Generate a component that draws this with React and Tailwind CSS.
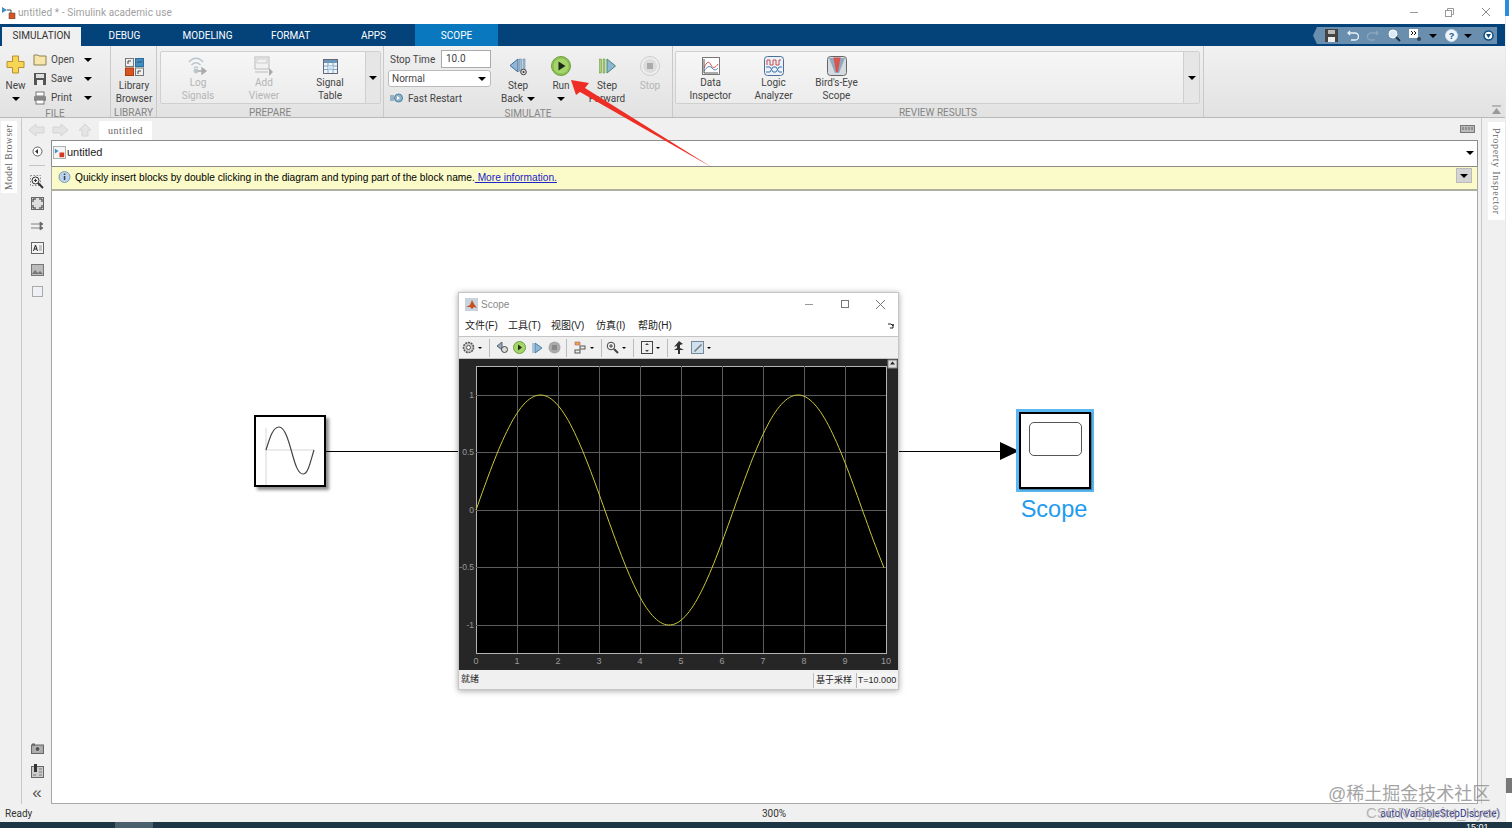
import React from "react";

const ui = { fontFamily: 'Roboto, "Noto Sans", sans-serif' };
const arial = { fontFamily: '"Liberation Sans", Arial, sans-serif' };
const serif = { fontFamily: '"Liberation Serif", serif' };
const cjk = { fontFamily: '"Liberation Sans", "Noto Sans CJK SC", sans-serif' };

function Caret({ className = "" }) {
  return <span className={"inline-block w-0 h-0 border-l-[4px] border-r-[4px] border-t-[4px] border-l-transparent border-r-transparent border-t-black " + className} />;
}

function LargeButton({ width, lines, icon, disabled, caret, gap = 2, className = "" }) {
  return (
    <div className={"flex flex-col items-center shrink-0 " + className} style={{ width }}>
      <div className="h-[22px] flex items-center justify-center">{icon}</div>
      <div className={"flex flex-col items-center text-[10px] leading-[13px] " + (disabled ? "text-[#b5b5b5]" : "text-[#444]")} style={{ marginTop: gap }}>
        {lines.map((l, i) => (
          <div key={i} className="whitespace-nowrap flex items-center gap-1">
            {l}
            {caret && lines.length > 1 && i === lines.length - 1 && <Caret />}
          </div>
        ))}
        {caret && lines.length === 1 && <Caret className="mt-[5px]" />}
      </div>
    </div>
  );
}

function SmallButton({ icon, label }) {
  return (
    <div className="h-[19px] flex items-center">
      <div className="w-[18px] flex justify-start">{icon}</div>
      <div className="w-[33px] text-[10px] text-[#444]">{label}</div>
      <Caret />
    </div>
  );
}

function RibbonSection({ width, label, children }) {
  return (
    <div className="flex flex-col shrink-0 border-r border-[#c9c9c9]" style={{ width }}>
      <div className="h-[61px] flex">{children}</div>
      <div className="h-[11px] text-[10px] leading-[13px] text-center text-[#858585]">{label}</div>
    </div>
  );
}

function Gallery({ className, children }) {
  return (
    <div className={"h-[53px] mt-[5px] flex border border-[#d0d0d0] rounded-[2px] bg-gradient-to-b from-[#f6f6f6] to-[#ececec] " + className}>
      {children}
    </div>
  );
}

/* ribbon icons */
const PlusIcon = () => (
  <svg width="19" height="19" viewBox="0 0 19 19"><path d="M6.5 1h6v5.5H18v6h-5.5V18h-6v-5.5H1v-6h5.5z" fill="#f6d654" stroke="#b9912c" /></svg>
);
const FolderIcon = () => (
  <svg width="14" height="13" viewBox="0 0 14 13"><path d="M1 2h4l1 1h7v9H1z" fill="#f6e7a8" stroke="#8d8057" /></svg>
);
const SaveIcon = () => (
  <svg width="14" height="14" viewBox="0 0 14 14"><rect x="1" y="1" width="12" height="12" fill="#555" /><rect x="3" y="2" width="8" height="4" fill="#ddd" /><rect x="4" y="8" width="6" height="5" fill="#eee" /></svg>
);
const PrintIcon = () => (
  <svg width="14" height="14" viewBox="0 0 14 14"><rect x="3" y="1" width="8" height="4" fill="#fff" stroke="#777" /><rect x="1" y="5" width="12" height="5" rx="1" fill="#888" /><rect x="3" y="9" width="8" height="4" fill="#fff" stroke="#777" /></svg>
);
const LibraryIcon = () => (
  <svg width="19" height="18" viewBox="0 0 19 18">
    <rect x="0.5" y="0.5" width="8" height="8" fill="#eee" stroke="#777" /><rect x="10.5" y="0.5" width="8" height="8" fill="#3d8fc4" stroke="#2c6d99" />
    <rect x="0.5" y="10" width="8" height="7.5" fill="#d9541e" stroke="#a83d12" /><rect x="10.5" y="10" width="8" height="7.5" fill="#eee" stroke="#777" />
    <path d="M3 6V3h3M12 5c2-3 3 1 5-2M13 16v-3h3" fill="none" stroke="#444" />
  </svg>
);
const LogIcon = () => (
  <svg width="20" height="20" viewBox="0 0 20 20" fill="none" stroke="#b9c6ce" strokeWidth="1.3">
    <path d="M1 6c4-5 10-5 14 0M3.500 9c3-3 6-3 9 0M6 12c1.500-1.500 3-1.500 4 0" /><circle cx="8" cy="15" r="1.800" fill="#b9c6ce" /><path d="M10 15h6M14 12l4 3-4 3z" fill="#aaa" stroke="#aaa" />
  </svg>
);
const ViewerIcon = () => (
  <svg width="20" height="20" viewBox="0 0 20 20" fill="none"><rect x="1" y="1" width="14" height="12" fill="#f2f2f2" stroke="#bbb" /><rect x="3" y="3" width="10" height="4" stroke="#ccc" /><path d="M1 16h13" stroke="#bbb" /><path d="M15 12l4 4-4 4z" fill="#aaa" /></svg>
);
const TableIcon = () => (
  <svg width="15" height="15" viewBox="0 0 15 15"><rect x="0.500" y="0.500" width="14" height="14" fill="#eef5fb" stroke="#667" /><rect x="1" y="1" width="13" height="3" fill="#6d97b9" /><path d="M1 7h13M1 10.500h13M5 4v10M10 4v10" stroke="#7ea3c4" /><rect x="5" y="7" width="5" height="3.500" fill="#cfe0ef" /></svg>
);
const FastIcon = () => (
  <svg width="14" height="10" viewBox="0 0 14 10"><path d="M0 3h4M0 5h4M0 7h4" stroke="#4a7f9f" /><circle cx="8.500" cy="5" r="4" fill="#8fb5cc" stroke="#4a7f9f" /><path d="M7 3l3 2-3 2z" fill="#fff" /></svg>
);
const BackIcon = () => (
  <svg width="19" height="19" viewBox="0 0 19 19"><path d="M9 2v13L1 8.500z" fill="#8fb6d8" stroke="#3e6d94" /><rect x="10.500" y="2" width="2" height="12" fill="#9fc0dd" stroke="#5a7d99" strokeWidth=".5" /><rect x="14" y="2" width="2" height="12" fill="#9fc0dd" stroke="#5a7d99" strokeWidth=".5" /><circle cx="14.500" cy="15" r="2.800" fill="#ddd" stroke="#444" /><circle cx="14.500" cy="15" r="1" fill="#333" /></svg>
);
const RunIcon = () => (
  <svg width="20" height="20" viewBox="0 0 20 20"><circle cx="10" cy="10" r="9.500" fill="#8cc152" stroke="#6e9e3c" /><circle cx="10" cy="10" r="7.500" fill="#a5d46a" /><path d="M7.500 5.500l7 4.500-7 4.500z" fill="#1f2a16" /></svg>
);
const ForwardIcon = () => (
  <svg width="19" height="19" viewBox="0 0 19 19"><rect x="1.500" y="2" width="2" height="14" fill="#a7d06e" stroke="#6e8e3f" strokeWidth=".5" /><rect x="5" y="2" width="2" height="14" fill="#a7d06e" stroke="#6e8e3f" strokeWidth=".5" /><path d="M9 2v14l8.500-7z" fill="#8fb6d8" stroke="#3e8a6d" /></svg>
);
const StopIcon = () => (
  <svg width="20" height="20" viewBox="0 0 20 20"><circle cx="10" cy="10" r="9.500" fill="#eee" stroke="#ccc" /><circle cx="10" cy="10" r="7" fill="#dcdcdc" /><rect x="7" y="7" width="6" height="6" fill="#aaa" /></svg>
);
const InspectorIcon = () => (
  <svg width="18" height="18" viewBox="0 0 18 18" fill="none"><rect x="0.500" y="0.500" width="17" height="17" fill="#fff" stroke="#777" /><path d="M2 11c3-7 5-7 7-3s4 3 7-1" stroke="#d9534f" /><path d="M2 14c3-4 5-6 8-3s4 2 6 0" stroke="#4a7fb0" /><path d="M2 2v14h14" stroke="#555" /></svg>
);
const LogicIcon = () => (
  <svg width="20" height="20" viewBox="0 0 20 20" fill="none"><rect x="0.500" y="0.500" width="19" height="19" rx="3" fill="#eaf1f8" stroke="#4d6f95" /><path d="M3 9V4h3v5h3V4h3v5h3V4h2" stroke="#c64d4d" /><path d="M2 11h4l3 5h3l3-5h3M2 16h4l3-5h3l3 5h3" stroke="#3f74a8" /></svg>
);
const BirdIcon = () => (
  <svg width="20" height="20" viewBox="0 0 20 20"><rect x="0.500" y="0.500" width="19" height="19" rx="3" fill="#d5dbe0" stroke="#666" /><path d="M2 2l6 15h4l6-15z" fill="#8fa9bd" /><path d="M6.500 1.500h7L11 16H9z" fill="#d9534f" /></svg>
);

/* left tool column icons */
const tool = "#666";
const ToolBtn = ({ children, top }) => <div className="flex justify-center" style={{ marginTop: top }}>{children}</div>;
const ZoomTool = () => (
  <svg width="14" height="14" viewBox="0 0 14 14" fill="none"><rect x="0.500" y="0.500" width="10" height="10" stroke="#888" strokeDasharray="1.500 1.500" /><circle cx="5.500" cy="5.500" r="3.500" stroke="#333" /><path d="M8 8l5 5" stroke="#333" strokeWidth="2" /><path d="M4 5.500h3M5.500 4v3" stroke="#333" /></svg>
);
const FitTool = () => (
  <svg width="13" height="13" viewBox="0 0 13 13"><rect x="0.500" y="0.500" width="12" height="12" fill="#ddd" stroke="#666" /><path d="M2 5V2h3M8 2h3v3M11 8v3H8M5 11H2V8" fill="none" stroke="#333" /></svg>
);
const ArrowsTool = () => (
  <svg width="13" height="10" viewBox="0 0 13 10"><path d="M0 3h10M0 7h10M9 1l3 2-3 2zM9 5l3 2-3 2z" fill={tool} stroke={tool} strokeWidth=".8" /></svg>
);
const TextTool = () => (
  <svg width="13" height="12" viewBox="0 0 13 12"><rect x="0.500" y="0.500" width="12" height="11" fill="#f3f3f3" stroke="#666" /><path d="M2.500 9l2-6 2 6M3.300 7h2.500" fill="none" stroke="#222" /><path d="M8 4h3M8 6h3M8 8h3" stroke="#999" /></svg>
);
const ImageTool = () => (
  <svg width="13" height="12" viewBox="0 0 13 12"><rect x="0.500" y="0.500" width="12" height="11" fill="#bbb" stroke="#777" /><path d="M1 10l3-4 3 3 2-2 3 3z" fill="#777" /></svg>
);
const CameraTool = () => (
  <svg width="13" height="11" viewBox="0 0 13 11"><rect x="0.500" y="2" width="12" height="8.500" fill="#aaa" stroke="#666" /><rect x="1" y="0.500" width="3" height="2" fill="#666" /><circle cx="6.500" cy="6" r="2.500" fill="#555" stroke="#eee" strokeWidth=".6" /></svg>
);
const SchemaTool = () => (
  <svg width="13" height="14" viewBox="0 0 13 14"><rect x="0.500" y="2.500" width="12" height="11" fill="#ccc" stroke="#666" /><rect x="3" y="0" width="3" height="8" fill="#333" /><path d="M8 5h3M8 8h3M2 11h3M8 11h3" stroke="#777" /></svg>
);

function ScopeTools() {
  const sep = <div className="w-px h-[18px] bg-[#bbb] mx-[4px]" />;
  const mini = <Caret className="!border-l-[2px] !border-r-[2px] !border-t-[2px] mx-[3px]" />;
  return (
    <div className="h-[23px] shrink-0 flex items-center pl-[3px] bg-[#f0f0f0] border-t border-b border-[#c4c4c4]">
      <svg width="13" height="13" viewBox="0 0 13 13" fill="none"><circle cx="6.500" cy="6.500" r="5" fill="#ccc" stroke="#555" strokeWidth="1.500" strokeDasharray="2 .8" /><circle cx="6.500" cy="6.500" r="2" fill="#fff" stroke="#555" /></svg>
      {mini}
      {sep}
      <svg className="ml-[2px]" width="13" height="13" viewBox="0 0 13 13"><path d="M6 1v8L1 5z" fill="#9ab" stroke="#567" /><circle cx="8.500" cy="8.500" r="3" fill="#ddd" stroke="#444" /></svg>
      <svg className="ml-[4px]" width="13" height="13" viewBox="0 0 13 13"><circle cx="6.500" cy="6.500" r="6" fill="#a5d46a" stroke="#6e9e3c" /><path d="M5 3.500l4 3-4 3z" fill="#1f2a16" /></svg>
      <svg className="ml-[5px]" width="12" height="12" viewBox="0 0 12 12"><rect x="1" y="1" width="2" height="10" fill="#a7c4dd" /><path d="M4 1v10l7-5z" fill="#8fb6d8" stroke="#4a7fa5" /></svg>
      <svg className="ml-[5px]" width="13" height="13" viewBox="0 0 13 13"><circle cx="6.500" cy="6.500" r="6" fill="#aaa" /><rect x="4" y="4" width="5" height="5" fill="#888" /></svg>
      <div className="ml-[1px]">{sep}</div>
      <svg className="ml-[3px]" width="13" height="13" viewBox="0 0 13 13" fill="none"><rect x="1" y="1" width="5" height="3" fill="#e8a24a" stroke="#a66" strokeWidth=".6" /><rect x="6" y="5" width="5" height="3" stroke="#555" /><rect x="1" y="9" width="5" height="3" stroke="#555" /></svg>
      {mini}
      {sep}
      <svg width="13" height="13" viewBox="0 0 13 13" fill="none"><circle cx="5" cy="5" r="3.800" stroke="#444" /><path d="M8 8l4 4" stroke="#444" strokeWidth="2" /><path d="M3 5h4M5 3v4" stroke="#444" /></svg>
      {mini}
      {sep}
      <svg className="ml-[3px]" width="12" height="13" viewBox="0 0 12 13" fill="none"><rect x="0.500" y="0.500" width="11" height="12" stroke="#444" /><path d="M6 2l2 2H4zM6 11L4 9h4z" fill="#444" /></svg>
      {mini}
      {sep}
      <svg className="ml-[1px]" width="12" height="13" viewBox="0 0 12 13"><path d="M6 0l4 3-3 1v3l4 2H1l3-2V5l-3 1z" fill="#333" /><rect x="5" y="9" width="2" height="4" fill="#333" /></svg>
      <svg className="ml-[6px]" width="13" height="13" viewBox="0 0 13 13"><rect x="0.500" y="0.500" width="12" height="12" fill="#cfe0ef" stroke="#789" /><path d="M3 10L10 3l1 1-7 7z" fill="#777" /></svg>
      {mini}
    </div>
  );
}

function ScopePlot() {
  const xs = [0, 1, 2, 3, 4, 5, 6, 7, 8, 9, 10];
  const ys = [[1, 36], [0.5, 93], [0, 151], [-0.5, 208], [-1, 266]];
  const sine = [];
  for (let t = 0; t <= 10; t += 0.05) sine.push(`${(17 + 41 * t).toFixed(1)},${(151 - 115 * Math.sin(t)).toFixed(1)}`);
  return (
    <svg width="439" height="311" viewBox="0 0 439 311" className="block shrink-0 bg-[#262626]" style={arial}>
      <rect x="17.500" y="7.500" width="410" height="287" fill="#000" stroke="#b4b4b4" />
      {xs.slice(1, -1).map((x) => <line key={x} x1={17.5 + 41 * x} x2={17.5 + 41 * x} y1="7" y2="294" stroke="#5c5c5c" />)}
      {ys.map(([v, y]) => <line key={v} x1="17" x2="427" y1={y + 0.5} y2={y + 0.5} stroke="#5c5c5c" />)}
      <polyline points={sine.join(" ")} fill="none" stroke="#c9c93a" />
      {xs.map((x) => <text key={x} x={17 + 41 * x} y="305" fontSize="9" fill="#9a9a9a" textAnchor="middle">{x}</text>)}
      {ys.map(([v, y]) => <text key={v} x="15" y={y + 3} fontSize="8.500" fill="#9a9a9a" textAnchor="end">{v}</text>)}
      <rect x="429" y="1" width="9" height="8" fill="#ddd" stroke="#888" />
      <path d="M433.500 2.500l2.500 3h-5z" fill="#222" />
    </svg>
  );
}

function ScopeWindow() {
  return (
    <div className="absolute left-[406px] top-[101px] w-[441px] h-[398px] bg-white border border-[#c6c6c6] shadow-[0_1px_6px_rgba(0,0,0,0.35)] flex flex-col">
      <div className="h-[22px] flex items-center pl-[6px] shrink-0">
        <svg width="13" height="13" viewBox="0 0 13 13"><rect width="13" height="13" fill="#c9d3dd" /><path d="M1 9l4-2 2-5 2 4 3 4-3-1-2 2-2-2z" fill="#c8501e" /></svg>
        <span className="ml-[3px] text-[10px] text-[#8a8a8a]" style={arial}>Scope</span>
        <div className="ml-auto flex items-center">
          <div className="w-[8px] h-px bg-[#999] mr-[28px]" />
          <div className="w-[8px] h-[8px] border border-[#777] mr-[27px]" />
          <svg className="mr-[13px]" width="9" height="9" viewBox="0 0 9 9"><path d="M0 0l9 9M9 0L0 9" stroke="#777" /></svg>
        </div>
      </div>
      <div className="h-[21px] relative flex items-center pl-[6px] text-[10px] text-[#222] shrink-0" style={cjk}>
        <span className="w-[43px]">文件(F)</span>
        <span className="w-[43px]">工具(T)</span>
        <span className="w-[45px]">视图(V)</span>
        <span className="w-[42px]">仿真(I)</span>
        <span>帮助(H)</span>
        <svg className="absolute right-[4px] top-[8px]" width="6" height="6" viewBox="0 0 6 6"><path d="M0 1h3l2 2V1v4H2" fill="none" stroke="#222" /></svg>
      </div>
      <ScopeTools />
      <ScopePlot />
      <div className="flex-1 flex items-center bg-[#f0f0f0] text-[9px] text-[#222] pl-[2px] pt-[1px]" style={cjk}>
        <span className="flex-1">就绪</span>
        <span className="w-[41px] h-[15px] leading-[15px] text-center border-l border-[#bbb] bg-[#f4f4f4]">基于采样</span>
        <span className="w-[41px] h-[15px] leading-[15px] text-center ml-[2px] border-l border-[#bbb] bg-[#f4f4f4] mr-[1px]">T=10.000</span>
      </div>
    </div>
  );
}

function Canvas() {
  return (
    <div className="flex-1 relative bg-white border-l border-r border-b border-[#a8a8a8]">
      {/* source block */}
      <div className="absolute left-[202px] top-[224px] w-[72px] h-[72px] bg-white border-2 border-black shadow-[3px_3px_3px_rgba(0,0,0,0.45)]">
        <svg width="68" height="68" viewBox="0 0 68 68" fill="none">
          <path d="M10 11v60M10 33h48" stroke="#d6d6d6" />
          <path d="M10 33C14 20 17 10 23 10S33 25 36 36 42 57 47 57 54 46 58 33" stroke="#444" strokeWidth="1.200" />
        </svg>
      </div>
      <div className="absolute left-[274px] top-[260px] w-[133px] h-px bg-black" />
      <div className="absolute left-[846px] top-[260px] w-[103px] h-px bg-black" />
      <div className="absolute left-[948px] top-[251px] w-0 h-0 border-y-[9px] border-y-transparent border-l-[19px] border-l-black" />

      {/* scope block */}
      <div className="absolute left-[964px] top-[218px] w-[78px] h-[83px] bg-[#5cb8f2] p-[3px]">
        <div className="w-full h-full bg-white border-2 border-black relative shadow-[1px_1px_1px_rgba(0,0,0,0.3)]">
          <div className="absolute left-[8px] top-[8px] w-[53px] h-[34px] rounded-[5px] border-[1.5px] border-[#555]" />
        </div>
      </div>
      <div className="absolute left-[952px] top-[303px] w-[100px] text-center text-[23.5px] leading-[30px] text-[#1e9bef]" style={arial}>Scope</div>

      <ScopeWindow />
    </div>
  );
}

function ToolColumn() {
  return (
    <div className="w-[29px] shrink-0 flex flex-col items-center bg-[#f0f0f0] pl-[1px]">
      <ToolBtn top="6px">
        <svg width="11" height="11" viewBox="0 0 11 11"><circle cx="5.500" cy="5.500" r="4.500" fill="#fff" stroke="#666" /><path d="M3 5.500l3-2.500v5z" fill="#333" /></svg>
      </ToolBtn>
      <div className="w-[16px] h-px bg-[#c4c4c4] mt-[8px]" />
      <ToolBtn top="9px"><ZoomTool /></ToolBtn>
      <ToolBtn top="8px"><FitTool /></ToolBtn>
      <ToolBtn top="11px"><ArrowsTool /></ToolBtn>
      <ToolBtn top="11px"><TextTool /></ToolBtn>
      <ToolBtn top="10px"><ImageTool /></ToolBtn>
      <ToolBtn top="10px"><div className="w-[11px] h-[11px] border border-[#aaa] bg-[#eef0f5]" /></ToolBtn>
      <div className="mt-auto flex flex-col items-center pb-[3px]">
        <CameraTool />
        <div className="mt-[10px]"><SchemaTool /></div>
        <div className="mt-[7px] text-[17px] leading-[16px] text-[#555]" style={arial}>«</div>
      </div>
    </div>
  );
}

function Ribbon() {
  return (
    <div className="h-[72px] flex bg-gradient-to-b from-[#f1f1f1] to-[#e2e2e2] border-b border-[#b9b9b9] relative" style={ui}>
      <RibbonSection width="111px" label="FILE">
        <div className="w-[31px] flex flex-col items-center pt-[9px] text-[10px] text-[#444]">
          <PlusIcon />
          <div className="mt-[5px] leading-[13px]">New</div>
          <Caret className="mt-[5px]" />
        </div>
        <div className="pt-[4px] ml-[2px]">
          <SmallButton icon={<FolderIcon />} label="Open" />
          <SmallButton icon={<SaveIcon />} label="Save" />
          <SmallButton icon={<PrintIcon />} label="Print" />
        </div>
      </RibbonSection>

      <RibbonSection width="46px" label="LIBRARY">
        <LargeButton width="46px" gap={1} className="pt-[10px]" lines={["Library", "Browser"]} icon={<LibraryIcon />} />
      </RibbonSection>

      <RibbonSection width="227px" label="PREPARE">
        <div className="w-[3px]" />
        <Gallery className="w-[221px]">
          <LargeButton width="66px" gap={-1} className="ml-[4px] pt-[3px]" disabled lines={["Log", "Signals"]} icon={<LogIcon />} />
          <LargeButton width="66px" gap={-1} className="pt-[3px]" disabled lines={["Add", "Viewer"]} icon={<ViewerIcon />} />
          <LargeButton width="66px" gap={-1} className="pt-[3px]" lines={["Signal", "Table"]} icon={<TableIcon />} />
          <div className="ml-auto w-[15px] border-l border-[#cfcfcf] bg-[#e6e6e6] flex items-center justify-center"><Caret /></div>
        </Gallery>
      </RibbonSection>

      <RibbonSection width="289px" label="SIMULATE">
        <div className="w-[110px] shrink-0 pl-[4px] pt-[4px] text-[10px] text-[#444]">
          <div className="flex items-center h-[18px] pl-[2px]">
            <span className="w-[51px]">Stop Time</span>
            <div className="w-[50px] h-[18px] bg-white border border-[#aaa] pl-[4px] leading-[16px]">10.0</div>
          </div>
          <div className="w-[103px] h-[17px] mt-[2px] bg-white border border-[#bbb] rounded-[3px] flex items-center px-[3px] justify-between">
            <span>Normal</span><Caret className="mr-[1px]" />
          </div>
          <div className="flex items-center h-[18px] mt-[2px] pl-[2px] gap-[4px]"><FastIcon /> Fast Restart</div>
        </div>
        <LargeButton width="46px" className="ml-[1px] pt-[9px]" caret lines={["Step", "Back"]} icon={<BackIcon />} />
        <LargeButton width="40px" className="pt-[9px]" caret lines={["Run"]} icon={<RunIcon />} />
        <LargeButton width="52px" className="pt-[9px]" lines={["Step", "Forward"]} icon={<ForwardIcon />} />
        <LargeButton width="34px" className="pt-[9px]" disabled lines={["Stop"]} icon={<StopIcon />} />
      </RibbonSection>

      <RibbonSection width="531px" label="REVIEW RESULTS">
        <div className="w-[2px]" />
        <Gallery className="w-[525px]">
          <LargeButton width="63px" gap={-1} className="ml-[3px] pt-[3px]" lines={["Data", "Inspector"]} icon={<InspectorIcon />} />
          <LargeButton width="63px" gap={-1} className="pt-[3px]" lines={["Logic", "Analyzer"]} icon={<LogicIcon />} />
          <LargeButton width="63px" gap={-1} className="pt-[3px]" lines={["Bird's-Eye", "Scope"]} icon={<BirdIcon />} />
          <div className="ml-auto w-[16px] border-l border-[#cfcfcf] bg-[#e6e6e6] flex items-center justify-center"><Caret /></div>
        </Gallery>
      </RibbonSection>

      <svg className="absolute right-[3px] bottom-[1px]" width="11" height="11" viewBox="0 0 11 11"><path d="M1 1h9" stroke="#888" /><path d="M5.500 3l4.500 6H1z" fill="#999" /></svg>
    </div>
  );
}

function QuickAccess() {
  return (
    <div className="ml-auto mr-[8px] mt-[3px] h-[17px] w-[184px] bg-[#6a8eae] flex items-center pl-[12px] [clip-path:polygon(4px_0,100%_0,100%_100%,4px_100%,0_50%)]">
      <svg width="13" height="13" viewBox="0 0 13 13"><rect width="13" height="13" fill="#444" /><rect x="3" y="1" width="7" height="4" fill="#bbb" /><rect x="3" y="8" width="7" height="5" fill="#eee" /></svg>
      <svg className="ml-[9px]" width="12" height="11" viewBox="0 0 12 11" fill="none"><path d="M1 3h7a3 3 0 010 7H4M3 1L1 3l2 2" stroke="#e8f2fa" strokeWidth="1.300" /></svg>
      <svg className="ml-[8px]" width="12" height="11" viewBox="0 0 12 11" fill="none"><path d="M11 3H4a3 3 0 000 7h4M9 1l2 2-2 2" stroke="#8aa6bf" strokeWidth="1.300" /></svg>
      <svg className="ml-[9px]" width="13" height="13" viewBox="0 0 13 13" fill="none"><circle cx="5" cy="5" r="4" fill="#dbe9f4" stroke="#fff" /><path d="M8 8l4 4" stroke="#234" strokeWidth="2" /></svg>
      <svg className="ml-[8px]" width="13" height="13" viewBox="0 0 13 13"><rect width="9" height="9" fill="#fff" /><path d="M2 2l2 2-2 2M5 2l2 2-2 2" fill="none" stroke="#111" /><circle cx="10" cy="10" r="2" fill="#345" /></svg>
      <Caret className="ml-[7px]" />
      <svg className="ml-[8px]" width="13" height="13" viewBox="0 0 13 13"><circle cx="6.500" cy="6.500" r="6" fill="#eef5fb" stroke="#cde" /><text x="6.500" y="10" fontSize="9" fontWeight="700" textAnchor="middle" fill="#1d4f80" style={arial}>?</text></svg>
      <Caret className="ml-[6px]" />
      <svg className="ml-[11px]" width="11" height="11" viewBox="0 0 11 11"><circle cx="5.500" cy="5.500" r="4.500" fill="#fff" stroke="#0b4f85" strokeWidth="1.500" /><path d="M3 4h5L5.500 8z" fill="#0b4f85" /></svg>
    </div>
  );
}

export default function App() {
  const tabs = ["DEBUG", "MODELING", "FORMAT", "APPS"];
  return (
    <div className="relative w-[1512px] h-[828px] overflow-hidden bg-white flex flex-col" style={ui}>
      <div className="flex-1 flex min-h-0">
        <div className="w-[1505px] shrink-0 flex flex-col">
          {/* title bar */}
          <div className="h-6 flex items-center pl-[2px] shrink-0">
            <svg width="14" height="14" viewBox="0 0 14 14"><path d="M0 2l5 3-5 3z" fill="#3d8fc4" /><rect x="7" y="8" width="6" height="6" fill="#d9541e" stroke="#444" strokeWidth=".5" /><path d="M5 5h4v3" fill="none" stroke="#444" /></svg>
            <span className="ml-[2px] text-[10px] tracking-[0.1px] text-[#a0a0a0]">untitled * - Simulink academic use</span>
            <div className="ml-auto flex items-center">
              <div className="w-[8px] h-px bg-[#999] mr-[27px]" />
              <svg className="mr-[28px]" width="9" height="9" viewBox="0 0 9 9" fill="none"><path d="M2.500 2V.5h6v6H7" stroke="#999" /><rect x="0.500" y="2.500" width="6" height="6" stroke="#999" /></svg>
              <svg className="mr-[15px]" width="8" height="8" viewBox="0 0 8 8"><path d="M0 0l8 8M8 0L0 8" stroke="#888" /></svg>
            </div>
          </div>

          {/* tabs */}
          <div className="h-[22px] flex bg-[#04437a] shrink-0 text-[10px]">
            <div className="ml-[2px] mt-[3px] w-[79px] h-[19px] bg-[#f0f0f0] text-[#333] text-center leading-[18px]">SIMULATION</div>
            <div className="w-[2px]" />
            {tabs.map((t) => (
              <div key={t} className="w-[83px] text-center leading-[23px] text-white">{t}</div>
            ))}
            <div className="w-[83px] bg-[#0a78be] text-center leading-[23px] text-white">SCOPE</div>
            <QuickAccess />
          </div>

          <Ribbon />

          {/* editor */}
          <div className="flex-1 flex min-h-0 bg-[#f0f0f0]">
            <div className="w-[22px] shrink-0 border-r border-[#c8c8c8] pt-[3px]">
              <div className="ml-[1px] w-[16px] h-[72px] bg-white flex items-center justify-center">
                <span className="text-[9.500px] tracking-[0.5px] text-[#666] whitespace-nowrap [writing-mode:vertical-rl] rotate-180" style={serif}>Model Browser</span>
              </div>
            </div>

            <div className="flex-1 flex flex-col min-w-0">
              <div className="h-[22px] flex items-end shrink-0 relative">
                <svg className="ml-[6px] mb-[3px]" width="68" height="14" viewBox="0 0 68 14">
                  <path d="M1 7l7-6v3h8v6H8v3z" fill="#e4e4e4" stroke="#d4d4d4" />
                  <path d="M40 7l-7-6v3h-8v6h8v3z" fill="#e4e4e4" stroke="#d4d4d4" />
                  <path d="M57 1l6 6h-3v6h-6V7h-3z" fill="#e4e4e4" stroke="#d4d4d4" />
                </svg>
                <div className="ml-[3px] w-[53px] h-[19px] bg-white text-center text-[10px] leading-[20px] tracking-[0.55px] text-[#666]" style={serif}>untitled</div>
                <svg className="absolute right-[6px] top-[7px]" width="15" height="8" viewBox="0 0 15 8"><rect x="0.500" y="0.500" width="14" height="7" fill="#bbb" stroke="#777" /><path d="M3 2v3M6 2v3M9 2v3M12 2v3" stroke="#666" /></svg>
              </div>

              <div className="flex-1 flex min-h-0">
                <ToolColumn />
                <div className="flex-1 flex flex-col min-w-0 mr-[3px]">
                  <div className="h-[26px] shrink-0 bg-white border border-b-0 border-[#8c8c8c] flex items-center pl-[1px] pr-[3px] pb-[2px] relative">
                    <svg width="13" height="13" viewBox="0 0 14 14"><rect x="0.500" y="0.500" width="13" height="13" fill="#f4f4f4" stroke="#aaa" /><path d="M2 3l4 2.500L2 8z" fill="#3d8fc4" /><rect x="7" y="7" width="5" height="5" fill="#d9341e" /></svg>
                    <span className="ml-[1px] text-[11px] text-[#222]" style={arial}>untitled</span>
                    <Caret className="ml-auto" />
                  </div>
                  <div className="h-[25px] shrink-0 bg-[#fbfbc9] border-l border-r border-t border-b-2 border-t-[#8c8c8c] border-x-[#a8a8a8] border-b-[#b0b0a0] flex items-center pb-[1px] relative">
                    <svg className="ml-[6px]" width="13" height="13" viewBox="0 0 13 13"><circle cx="6.500" cy="6" r="5.500" fill="#bcd3ea" stroke="#7f9cb8" /><rect x="5.800" y="2.500" width="1.500" height="1.500" fill="#345" /><rect x="5.800" y="5" width="1.500" height="4" fill="#345" /></svg>
                    <span className="ml-[4px] text-[10.200px] text-black whitespace-nowrap" style={arial}>
                      Quickly insert blocks by double clicking in the diagram and typing part of the block name.
                      <span className="text-[#2222c8] underline"> More information.</span>
                    </span>
                    <div className="absolute right-[5px] top-[1px] w-[16px] h-[15px] bg-[#d4d4d4] border border-[#bbb] flex items-center justify-center"><Caret /></div>
                  </div>
                  <Canvas />
                </div>
              </div>
            </div>

            <div className="w-[24px] shrink-0 border-l border-[#c8c8c8] pt-[4px] flex justify-end">
              <div className="w-[17px] h-[98px] bg-white flex items-center justify-center">
                <span className="text-[10px] tracking-[0.7px] text-[#666] whitespace-nowrap [writing-mode:vertical-rl]" style={serif}>Property Inspector</span>
              </div>
            </div>
          </div>

          {/* status */}
          <div className="h-[18px] shrink-0 bg-[#f0f0f0] flex items-center pl-[5px] pt-[1px] relative text-[10px] text-[#333]">
            <span>Ready</span>
            <span className="absolute left-[762px]">300%</span>
            <span className="absolute right-[5px] text-[#33338a]">auto(VariableStepDiscrete)</span>
          </div>
        </div>
        <div className="flex-1 border-l border-[#e8e8e8] flex flex-col justify-end pb-[29px]">
          <div className="h-[15px] bg-[#777]" />
        </div>
      </div>

      {/* taskbar */}
      <div className="h-[6px] shrink-0 bg-[#1d3545] relative">
        <div className="absolute left-[115px] top-0 w-[38px] h-full bg-[#4b606d]" />
        <div className="absolute left-[1466px] top-0 h-full overflow-hidden text-[9px] leading-[10px] text-white" style={arial}>15:01</div>
      </div>

      {/* overlays */}
      <div className="absolute left-[1505px] top-0 w-[4px] h-[16px] bg-[#2a8be0]" />
      <svg className="absolute left-[560px] top-[70px] pointer-events-none" width="160" height="105" viewBox="0 0 160 105">
        <path d="M11 10L29 13 25 18 153 98 20 22 16 25z" fill="#ee2e24" />
      </svg>
      <div className="absolute left-[1328px] top-[783px] text-[18px] leading-[22px] text-[#8e8e8e] whitespace-nowrap opacity-80" style={cjk}>@稀土掘金技术社区</div>
      <div className="absolute left-[1366px] top-[803px] text-[15px] leading-[20px] text-[#9a9a9a] whitespace-nowrap opacity-70" style={arial}>CSDN @print_Hyon</div>
    </div>
  );
}
